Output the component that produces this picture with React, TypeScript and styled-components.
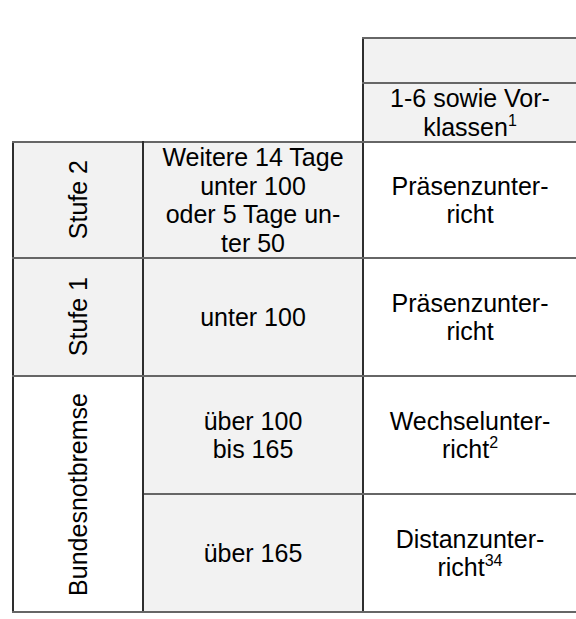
import React from "react";
import styled, { createGlobalStyle } from "styled-components";

const Global = createGlobalStyle`
  html, body { margin: 0; padding: 0; background: #ffffff; }
  body { font-family: "Liberation Sans", Arial, sans-serif; color: #000; }
`;

const Page = styled.div`
  padding: 37px 0 0 12px;
`;

const Sheet = styled.table`
  border-collapse: collapse;
  table-layout: fixed;
  width: 564px;
  font-family: "Liberation Sans", Arial, sans-serif;
  font-size: 25px;
  line-height: 28.5px;
  color: #000;
`;

const Row = styled.tr<{ $h: number }>`
  height: ${(p) => p.$h}px;
`;

const Cell = styled.td<{ $shade?: boolean; $noRight?: boolean }>`
  padding: 0;
  text-align: center;
  vertical-align: middle;
  background: ${(p) => (p.$shade ? "#f2f2f2" : "#ffffff")};
  border-top: 2px solid #666666;
  border-bottom: 2px solid #666666;
  border-left: 2px solid #2e2e2e;
  border-right: ${(p) => (p.$noRight ? "none" : "2px solid #2e2e2e")};
`;

const Blank = styled.td`
  padding: 0;
  border: none;
  background: #ffffff;
`;

const Vertical = styled.div`
  writing-mode: vertical-rl;
  transform: rotate(180deg);
  margin: 0 auto;
  white-space: nowrap;
  line-height: 29px;
`;

const Sup = styled.sup`
  font-size: 16px;
  line-height: 0;
  vertical-align: 10px;
`;

export default function App() {
  return (
    <>
      <Global />
      <Page>
        <Sheet>
          <colgroup>
            <col style={{ width: 130 }} />
            <col style={{ width: 220 }} />
            <col style={{ width: 214 }} />
          </colgroup>
          <tbody>
            <Row $h={45}>
              <Blank colSpan={2} rowSpan={2} />
              <Cell $shade $noRight />
            </Row>
            <Row $h={57}>
              <Cell $shade>
                1-6 sowie Vor-
                <br />
                klassen<Sup>1</Sup>
              </Cell>
            </Row>
            <Row $h={116}>
              <Cell $shade>
                <Vertical>Stufe 2</Vertical>
              </Cell>
              <Cell $shade>
                Weitere 14 Tage
                <br />
                unter 100
                <br />
                oder 5 Tage un-
                <br />
                ter 50
              </Cell>
              <Cell>
                Präsenzunter-
                <br />
                richt
              </Cell>
            </Row>
            <Row $h={118}>
              <Cell $shade>
                <Vertical>Stufe 1</Vertical>
              </Cell>
              <Cell $shade>unter 100</Cell>
              <Cell>
                Präsenzunter-
                <br />
                richt
              </Cell>
            </Row>
            <Row $h={118}>
              <Cell rowSpan={2}>
                <Vertical>Bundesnotbremse</Vertical>
              </Cell>
              <Cell $shade>
                über 100
                <br />
                bis 165
              </Cell>
              <Cell>
                Wechselunter-
                <br />
                richt<Sup>2</Sup>
              </Cell>
            </Row>
            <Row $h={118}>
              <Cell $shade>über 165</Cell>
              <Cell>
                Distanzunter-
                <br />
                richt<Sup>34</Sup>
              </Cell>
            </Row>
          </tbody>
        </Sheet>
      </Page>
    </>
  );
}
